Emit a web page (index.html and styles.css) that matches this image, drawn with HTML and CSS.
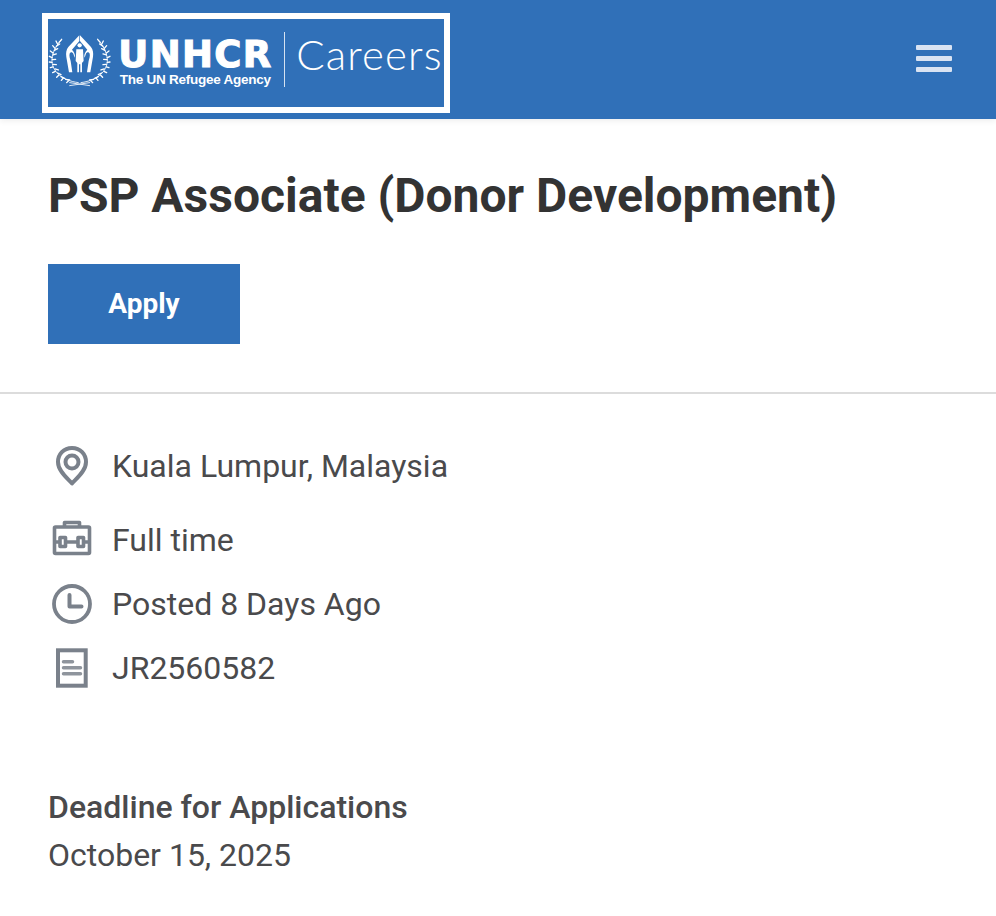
FILE: index.html
```html
<!DOCTYPE html>
<html lang="en">
<head>
<meta charset="utf-8">
<title>PSP Associate (Donor Development)</title>
<link rel="stylesheet" href="styles.css">
</head>
<body>
<header class="topbar">
  <a class="logo" href="#">
    <svg class="emblem" viewBox="25 10 190 175" width="63.3" height="58.3" aria-hidden="true">
      <defs>
        <g id="hand">
          <path d="M119 23 L86 58 C80 66 78 76 80 88 L88 134 L98 134 L93 100 C91 92 88 84 90 78 C92 72 98 72 101 78 L105 90 C108 80 102 72 97 66 L119 40 Z" fill="#fff"/>
        </g>
        <g id="wreath" fill="none" stroke="#fff" stroke-linecap="round">
          <path d="M64 38 C46 58 36 80 37 102 C39 128 62 158 116 165" stroke-width="2.500"/>
          <path d="M58 44 L66 35 M50 56 L60 49 M44 68 L54 63 M40 82 L50 79 M38 96 L48 95 M40 110 L50 111 M46 124 L56 127 M54 136 L64 141 M64 147 L75 152 M78 155 L90 157" stroke-width="4"/>
          <path d="M54 50 L49 40 M46 62 L39 54 M40 76 L32 70 M37 90 L29 86 M37 104 L29 103 M40 118 L32 120 M47 131 L39 135 M57 143 L51 149 M70 152 L65 158 M86 160 L81 165" stroke-width="4"/>
          <path d="M90 174 L150 165" stroke-width="2.500"/>
        </g>
      </defs>
      <use href="#hand"/>
      <use href="#hand" transform="matrix(-1 0 0 1 240 0)"/>
      <circle cx="120" cy="53" r="6.500" fill="#fff"/>
      <path d="M110 65 H130 L132 100 L127 106 V134 H122 V110 H118 V134 H113 V106 L108 100 Z" fill="#fff"/>
      <use href="#wreath"/>
      <use href="#wreath" transform="matrix(-1 0 0 1 240 0)"/>
    </svg>
    <span class="wordmark">
      <span class="wordmark-name">UNHCR</span>
      <span class="wordmark-tag">The UN Refugee Agency</span>
    </span>
    <span class="logo-rule"></span>
    <span class="logo-careers">Careers</span>
  </a>
  <button class="menu" type="button" aria-label="Menu">
    <span class="menu-line"></span>
    <span class="menu-line"></span>
    <span class="menu-line"></span>
  </button>
</header>

<main>
  <section class="hero">
    <h1 class="title">PSP Associate (Donor Development)</h1>
    <a class="apply" href="#">Apply</a>
  </section>

  <section class="details">
    <ul class="facts">
      <li class="fact fact-first">
        <svg class="icon" viewBox="0 0 48 48" width="48" height="48" aria-hidden="true">
          <path d="M24 6 C15.500 6 10 12.500 10 20 C10 29 19.500 36.500 24 41.500 C28.500 36.500 38 29 38 20 C38 12.500 32.500 6 24 6 Z" fill="none" stroke="#7a818b" stroke-width="4" stroke-linejoin="round"/>
          <circle cx="24" cy="20" r="6.500" fill="none" stroke="#7a818b" stroke-width="4"/>
        </svg>
        <span>Kuala Lumpur, Malaysia</span>
      </li>
      <li class="fact">
        <svg class="icon" viewBox="0 0 48 48" width="48" height="48" aria-hidden="true">
          <g fill="none" stroke="#7a818b" stroke-width="3.600" stroke-linejoin="round">
            <rect x="6.500" y="11" width="35" height="26.500" rx="1"/>
            <path d="M16.500 11 V6.500 H31.500 V11"/>
            <rect x="12" y="21.500" width="5.500" height="9"/>
            <rect x="30" y="21.500" width="5.500" height="9"/>
            <path d="M6.500 26 H12 M17.500 26 H30 M35.500 26 H41.500"/>
          </g>
        </svg>
        <span>Full time</span>
      </li>
      <li class="fact">
        <svg class="icon" viewBox="0 0 48 48" width="48" height="48" aria-hidden="true">
          <circle cx="24" cy="24" r="18" fill="none" stroke="#7a818b" stroke-width="3.800"/>
          <path d="M21.500 15 V26.500 H33.500" fill="none" stroke="#7a818b" stroke-width="4" stroke-linecap="round" stroke-linejoin="round"/>
        </svg>
        <span>Posted 8 Days Ago</span>
      </li>
      <li class="fact">
        <svg class="icon" viewBox="0 0 48 48" width="48" height="48" aria-hidden="true">
          <rect x="10" y="6.300" width="27.700" height="35.400" fill="none" stroke="#7a818b" stroke-width="4"/>
          <path d="M15.500 17.700 H24.500 M15.500 23.700 H32.500 M15.500 29.700 H32.500" fill="none" stroke="#8f959d" stroke-width="3.500" stroke-linecap="round"/>
        </svg>
        <span>JR2560582</span>
      </li>
    </ul>

    <div class="deadline">
      <div class="deadline-label">Deadline for Applications</div>
      <div class="deadline-date">October 15, 2025</div>
    </div>
  </section>
</main>
</body>
</html>
```

FILE: styles.css
```css
* { box-sizing: border-box; }

html, body {
  margin: 0;
  padding: 0;
  background: #fff;
}

body {
  font-family: Roboto, "Liberation Sans", sans-serif;
  color: #4a4a4c;
  overflow: hidden;
}

.topbar {
  height: 119px;
  background: #3070b8;
  padding: 13px 44px 0 42px;
  display: flex;
  justify-content: space-between;
  align-items: flex-start;
  box-shadow: 0 2px 6px rgba(0, 0, 0, 0.07);
  position: relative;
}

.logo {
  width: 408px;
  height: 100px;
  border: 6px solid #fff;
  display: flex;
  align-items: center;
  color: #fff;
  text-decoration: none;
}

.emblem {
  flex: none;
  margin-right: 5px;
  margin-top: -6px;
}

.wordmark {
  flex: none;
  display: flex;
  flex-direction: column;
  width: 153px;
  margin-top: -1px;
  padding-left: 2px;
  font-weight: 700;
}

.wordmark-name {
  font-family: "DejaVu Sans", "Liberation Sans", sans-serif;
  font-size: 37px;
  line-height: 34px;
  letter-spacing: 1.300px;
  -webkit-text-stroke: 1.100px #fff;
}

.wordmark-tag {
  font-family: "Liberation Sans", Arial, sans-serif;
  font-size: 13.500px;
  line-height: 16px;
  letter-spacing: -0.250px;
  margin-left: 1.500px;
  white-space: nowrap;
}

.logo-rule {
  flex: none;
  width: 1px;
  height: 55px;
  background: rgba(255, 255, 255, 0.8);
  margin: -7px 11px 0 15px;
}

.logo-careers {
  font-family: Lato, "Open Sans", sans-serif;
  font-weight: 300;
  font-size: 42px;
  line-height: 1;
  letter-spacing: 1.100px;
  margin-top: -18px;
}

.menu {
  margin: 32px 0 0 0;
  padding: 0;
  border: 0;
  background: none;
  display: flex;
  flex-direction: column;
  gap: 6px;
  width: 36px;
}

.menu-line {
  display: block;
  height: 5px;
  border-radius: 1px;
  background: #d9e3f2;
}

.hero {
  padding: 49px 48px 48px;
  border-bottom: 2px solid #dcdcdc;
}

.title {
  margin: 0 0 40px;
  font-size: 48px;
  line-height: 56px;
  font-weight: 700;
  color: #333;
  white-space: nowrap;
}

.apply {
  display: flex;
  align-items: center;
  justify-content: center;
  width: 192px;
  height: 80px;
  padding-bottom: 2px;
  background: #3070b8;
  color: #fff;
  font-size: 28px;
  font-weight: 700;
  text-decoration: none;
}

.details {
  padding: 0 48px;
}

.facts {
  list-style: none;
  margin: 0;
  padding: 48px 0 0;
}

.fact {
  display: flex;
  align-items: center;
  gap: 16px;
  height: 48px;
  margin-bottom: 16px;
  font-size: 32px;
}

.fact-first {
  margin-bottom: 26px;
}

.icon {
  flex: none;
}

.deadline {
  margin-top: 91px;
  font-size: 32px;
  line-height: 48px;
}

.deadline-label {
  font-weight: 500;
}
```
